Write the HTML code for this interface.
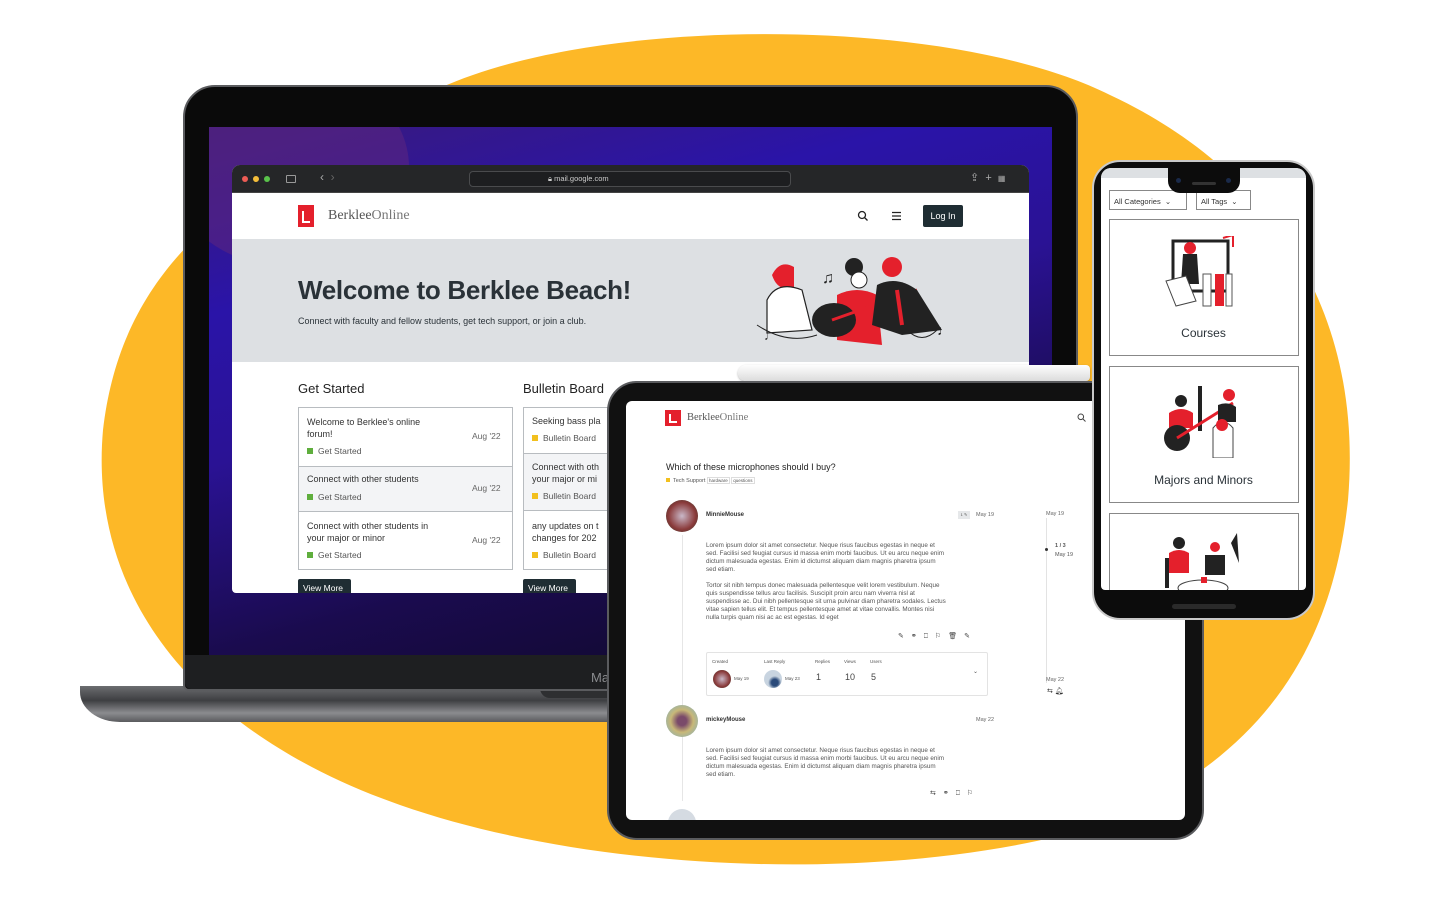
<!DOCTYPE html>
<html><head><meta charset="utf-8">
<style>
*{margin:0;padding:0;box-sizing:border-box}
body{width:1440px;height:900px;background:#fff;position:relative;overflow:hidden;font-family:"Liberation Sans",sans-serif;color:#222}
.a{position:absolute}
.t{position:absolute;white-space:nowrap}
</style></head><body>
<svg class="a" style="left:0;top:0" width="1440" height="900">
<path d="M440 88 C600 15 950 15 1110 95 C1260 165 1365 300 1348 500 C1332 650 1262 760 1100 825 C900 885 600 875 400 805 C200 735 88 600 103 430 C118 300 190 225 300 160 Z" fill="#fdb827"/>
</svg>

<!-- LAPTOP -->
<div class="a" style="left:80px;top:686px;width:1010px;height:36px;border-radius:0 0 40px 40px/0 0 30px 30px;background:linear-gradient(#6c6d70,#3e3f42 40%,#8b8c8f 75%,#5a5b5e)"></div>
<div class="a" style="left:540px;top:686px;width:80px;height:12px;border-radius:0 0 10px 10px;background:#2e2f31"></div>
<div class="a" style="left:183px;top:85px;width:895px;height:606px;border-radius:32px 32px 6px 6px;background:#0a0a0a;border:2px solid #5b5c5f"></div>
<div class="a" style="left:185px;top:655px;width:891px;height:34px;background:#1e1f21;border-radius:0 0 6px 6px"></div>
<div class="t" style="left:591px;top:670px;font-size:13px;color:#8a8b8e">Ma</div>
<div class="a" style="left:209px;top:127px;width:843px;height:528px;overflow:hidden;background:linear-gradient(165deg,#3a1a7a 0%,#2a14a8 25%,#2a1294 45%,#1a0b4e 70%,#0d0820 100%)">
 <div class="a" style="left:-40px;top:-60px;width:240px;height:200px;border-radius:50%;background:#5a2480;opacity:.6"></div>
</div>
<!-- browser -->
<div class="a" style="left:232px;top:165px;width:797px;height:428px;border-radius:8px 8px 4px 4px;overflow:hidden;background:#fff">
 <div class="a" style="left:0;top:0;width:797px;height:28px;background:#252628;border-bottom:1px solid #444"></div>
 <div class="a" style="left:10px;top:11px;width:6px;height:6px;border-radius:50%;background:#ed5c55"></div>
 <div class="a" style="left:21px;top:11px;width:6px;height:6px;border-radius:50%;background:#f4bd3a"></div>
 <div class="a" style="left:32px;top:11px;width:6px;height:6px;border-radius:50%;background:#5ac34b"></div>
 <div class="a" style="left:54px;top:10px;width:10px;height:8px;border:1px solid #999;border-radius:1px"></div>
 <div class="t" style="left:88px;top:5px;font-size:12px;color:#aaa">‹ &nbsp;<span style="color:#666">›</span></div>
 <div class="a" style="left:237px;top:6px;width:322px;height:16px;border:1px solid #4a4b4d;border-radius:4px;background:#1d1e20"></div>
 <div class="t" style="left:316px;top:9px;font-size:7.5px;color:#ccc">🔒︎ mail.google.com</div>
 <div class="t" style="left:738px;top:6px;font-size:11px;color:#aaa">⇪ &nbsp;+ &nbsp;<span style="font-size:8px">▦</span></div>
 <div class="a" style="left:0;top:74px;width:797px;height:123px;background:#dde0e3"></div>
 <div class="a" style="left:66px;top:40px;width:16px;height:22px;background:#e4202c"></div>
 <div class="a" style="left:70px;top:46px;width:8px;height:12px;border:2px solid #fff;border-top:none;border-right:none"></div>
 <div class="t" style="left:96px;top:43px;font-family:'Liberation Serif',serif;font-size:14px;color:#555">Berklee<span style="color:#777">Online</span></div>
 <svg class="a" style="left:625px;top:45px" width="12" height="12"><circle cx="5" cy="5" r="3.5" fill="none" stroke="#222" stroke-width="1.3"/><path d="M7.5 7.5 L10.5 10.5" stroke="#222" stroke-width="1.3"/></svg>
 <svg class="a" style="left:660px;top:46px" width="10" height="10"><path d="M0 1.5H9M0 5H9M0 8.5H9" stroke="#222" stroke-width="1.3"/></svg>
 <div class="a" style="left:691px;top:40px;width:40px;height:22px;background:#1f2d33;border-radius:2px;color:#fff;font-size:9px;text-align:center;line-height:22px">Log In</div>
 <div class="t" style="left:66px;top:110px;font-size:26px;font-weight:bold;color:#2a3238;letter-spacing:-.3px">Welcome to Berklee Beach!</div>
 <div class="t" style="left:66px;top:151px;font-size:9px;color:#2a3238">Connect with faculty and fellow students, get tech support, or join a club.</div>
 <svg class="a" style="left:520px;top:90px" width="215" height="92">
  <path d="M20 20 q8-16 22-8 l0 20 q-16 6-22-12z" fill="#e4202c"/>
  <path d="M15 45 q10-20 35-10 l10 40 l-45 3z" fill="#fff" stroke="#222" stroke-width="1.2"/>
  <circle cx="102" cy="12" r="9" fill="#222"/><circle cx="107" cy="25" r="8" fill="#fff" stroke="#222"/>
  <path d="M85 40 q20-10 40 0 l5 50 l-45 -5z" fill="#e4202c"/>
  <ellipse cx="82" cy="65" rx="22" ry="17" fill="#222"/>
  <path d="M80 65 L165 35" stroke="#e4202c" stroke-width="3"/>
  <circle cx="140" cy="12" r="10" fill="#e4202c"/>
  <path d="M125 30 q20-10 40 5 l25 40 l-40 5 l-30-10z" fill="#222"/>
  <path d="M145 35 l5 35" stroke="#e4202c" stroke-width="4"/>
  <path d="M5 70 q30 20 60 10 M155 75 q15 15 30 0" stroke="#222" fill="none"/>
  <text x="70" y="28" font-size="16" fill="#222">♫</text><text x="185" y="80" font-size="14" fill="#222">♩</text><text x="12" y="85" font-size="12" fill="#222">♩</text>
 </svg>
 <div class="t" style="left:66px;top:216px;font-size:13px;color:#222">Get Started</div>
 <div class="t" style="left:291px;top:216px;font-size:13px;color:#222">Bulletin Board</div>
 <div class="a" style="left:66px;top:242px;width:215px;height:163px;border:1px solid #b8bcc0"></div>
 <div class="a" style="left:67px;top:301px;width:213px;height:46px;background:#f3f4f6;border-top:1px solid #b8bcc0;border-bottom:1px solid #b8bcc0"></div>
 <div class="t" style="left:75px;top:251px;font-size:9px;line-height:12px;color:#333">Welcome to Berklee's online<br>forum!</div>
 <div class="t" style="left:75px;top:309px;font-size:9px;color:#333">Connect with other students</div>
 <div class="t" style="left:75px;top:355px;font-size:9px;line-height:12px;color:#333">Connect with other students in<br>your major or minor</div>
 <div class="t" style="left:240px;top:266px;font-size:8.5px;color:#666">Aug '22</div>
 <div class="t" style="left:240px;top:318px;font-size:8.5px;color:#666">Aug '22</div>
 <div class="t" style="left:240px;top:370px;font-size:8.5px;color:#666">Aug '22</div>
 <div class="t" style="left:75px;top:281px;font-size:8.5px;color:#555"><span style="display:inline-block;width:6px;height:6px;background:#5fae3d;margin-right:5px"></span>Get Started</div>
 <div class="t" style="left:75px;top:327px;font-size:8.5px;color:#555"><span style="display:inline-block;width:6px;height:6px;background:#5fae3d;margin-right:5px"></span>Get Started</div>
 <div class="t" style="left:75px;top:385px;font-size:8.5px;color:#555"><span style="display:inline-block;width:6px;height:6px;background:#5fae3d;margin-right:5px"></span>Get Started</div>
 <div class="a" style="left:291px;top:242px;width:110px;height:163px;border:1px solid #b8bcc0"></div>
 <div class="a" style="left:292px;top:288px;width:110px;height:58px;background:#f3f4f6;border-top:1px solid #b8bcc0;border-bottom:1px solid #b8bcc0"></div>
 <div class="t" style="left:300px;top:251px;font-size:9px;color:#333">Seeking bass pla</div>
 <div class="t" style="left:300px;top:296px;font-size:9px;line-height:12px;color:#333">Connect with oth<br>your major or mi</div>
 <div class="t" style="left:300px;top:355px;font-size:9px;line-height:12px;color:#333">any updates on t<br>changes for 202</div>
 <div class="t" style="left:300px;top:268px;font-size:8.5px;color:#555"><span style="display:inline-block;width:6px;height:6px;background:#f2c01e;margin-right:5px"></span>Bulletin Board</div>
 <div class="t" style="left:300px;top:326px;font-size:8.5px;color:#555"><span style="display:inline-block;width:6px;height:6px;background:#f2c01e;margin-right:5px"></span>Bulletin Board</div>
 <div class="t" style="left:300px;top:385px;font-size:8.5px;color:#555"><span style="display:inline-block;width:6px;height:6px;background:#f2c01e;margin-right:5px"></span>Bulletin Board</div>
 <div class="a" style="left:66px;top:414px;width:53px;height:16px;background:#1f2d33;border-radius:2px;color:#fff;font-size:8.5px;padding:4px 0 0 5px">View More</div>
 <div class="a" style="left:291px;top:414px;width:53px;height:16px;background:#1f2d33;border-radius:2px;color:#fff;font-size:8.5px;padding:4px 0 0 5px">View More</div>
</div>

<!-- PENCIL -->
<div class="a" style="left:738px;top:365px;width:352px;height:16px;border-radius:8px 4px 4px 8px;background:linear-gradient(#fdfdfd,#dcdcdc);box-shadow:0 1px 2px rgba(0,0,0,.3)"></div>

<!-- TABLET -->
<div class="a" style="left:607px;top:381px;width:597px;height:459px;border-radius:30px;background:#111;border:2px solid #5a5b5e"></div>
<div class="a" style="left:626px;top:401px;width:559px;height:419px;background:#fff;border-radius:6px;overflow:hidden">
 <div class="a" style="left:39px;top:9px;width:16px;height:16px;background:#e4202c"></div>
 <div class="a" style="left:43px;top:13px;width:8px;height:9px;border:2px solid #fff;border-top:none;border-right:none"></div>
 <div class="t" style="left:61px;top:11px;font-family:'Liberation Serif',serif;font-size:10.5px;color:#555">Berklee<span style="color:#777">Online</span></div>
 <svg class="a" style="left:451px;top:12px" width="9" height="9"><circle cx="3.8" cy="3.8" r="2.8" fill="none" stroke="#444"/><path d="M6 6L8.5 8.5" stroke="#444"/></svg>
 <div class="t" style="left:40px;top:61px;font-size:9px;color:#222">Which of these microphones should I buy?</div>
 <div class="t" style="left:40px;top:77px;font-size:5.5px;color:#555"><span style="display:inline-block;width:4px;height:4px;background:#f2c01e;margin-right:3px"></span>Tech Support <span style="border:1px solid #ddd;padding:0 1px;font-size:4.5px">hardware</span> <span style="border:1px solid #ddd;padding:0 1px;font-size:4.5px">questions</span></div>
 <div class="a" style="left:40px;top:99px;width:32px;height:32px;border-radius:50%;background:radial-gradient(#c9b8c8,#8a3a3a 60%,#2c3a2a)"></div>
 <div class="a" style="left:56px;top:134px;width:1px;height:240px;background:#e6e6e6"></div>
 <div class="t" style="left:80px;top:111px;font-size:6px;font-weight:bold;color:#333">MinnieMouse</div>
 <div class="a" style="left:332px;top:110px;width:12px;height:8px;background:#e6e8ea;font-size:4px;color:#555;text-align:center;line-height:8px">1 ✎</div>
 <div class="t" style="left:350px;top:111px;font-size:5.5px;color:#666">May 19</div>
 <div class="a" style="left:80px;top:141px;width:240px;font-size:6.3px;line-height:8px;color:#555;white-space:normal">Lorem ipsum dolor sit amet consectetur. Neque risus faucibus egestas in neque et sed. Facilisi sed feugiat cursus id massa enim morbi faucibus. Ut eu arcu neque enim dictum malesuada egestas. Enim id dictumst aliquam diam magnis pharetra ipsum sed etiam.<br><br>Tortor sit nibh tempus donec malesuada pellentesque velit lorem vestibulum. Neque quis suspendisse tellus arcu facilisis. Suscipit proin arcu nam viverra nisl at suspendisse ac. Dui nibh pellentesque sit urna pulvinar diam pharetra sodales. Lectus vitae sapien tellus elit. Et tempus pellentesque amet at vitae convallis. Montes nisi nulla turpis quam nisi ac ac est egestas. Id eget</div>
 <div class="t" style="left:272px;top:231px;font-size:7px;color:#444;letter-spacing:7px">✎⚭⎕⚐🗑︎✎</div>
 <div class="a" style="left:80px;top:251px;width:282px;height:44px;border:1px solid #e3e3e3;border-radius:2px"></div>
 <div class="t" style="left:86px;top:258px;font-size:4.5px;color:#555">Created</div>
 <div class="t" style="left:138px;top:258px;font-size:4.5px;color:#555">Last Reply</div>
 <div class="t" style="left:189px;top:258px;font-size:4.5px;color:#555">Replies</div>
 <div class="t" style="left:218px;top:258px;font-size:4.5px;color:#555">Views</div>
 <div class="t" style="left:244px;top:258px;font-size:4.5px;color:#555">Users</div>
 <div class="a" style="left:87px;top:269px;width:18px;height:18px;border-radius:50%;background:radial-gradient(#c9b8c8,#8a3a3a 60%,#2c3a2a)"></div>
 <div class="t" style="left:108px;top:275px;font-size:4.5px;color:#555">May 19</div>
 <div class="a" style="left:138px;top:269px;width:18px;height:18px;border-radius:50%;background:radial-gradient(circle at 60% 70%,#2a4a7a 20%,#c8d4e0 40%)"></div>
 <div class="t" style="left:159px;top:275px;font-size:4.5px;color:#555">May 23</div>
 <div class="t" style="left:190px;top:271px;font-size:9px;color:#444">1</div>
 <div class="t" style="left:219px;top:271px;font-size:9px;color:#444">10</div>
 <div class="t" style="left:245px;top:271px;font-size:9px;color:#444">5</div>
 <div class="t" style="left:347px;top:267px;font-size:6px;color:#555">⌄</div>
 <div class="a" style="left:420px;top:117px;width:1px;height:165px;background:#e3e3e3"></div>
 <div class="a" style="left:419px;top:147px;width:3px;height:3px;border-radius:50%;background:#333"></div>
 <div class="t" style="left:420px;top:110px;font-size:5.5px;color:#666">May 19</div>
 <div class="t" style="left:429px;top:141px;font-size:5.5px;line-height:9px;color:#555"><b>1 / 3</b><br>May 19</div>
 <div class="t" style="left:420px;top:276px;font-size:5.5px;color:#666">May 22</div>
 <div class="t" style="left:421px;top:286px;font-size:7px;color:#333">⇆ 🔔︎</div>
 <div class="a" style="left:40px;top:304px;width:32px;height:32px;border-radius:50%;background:radial-gradient(#7a4a6a 20%,#c8b878 50%,#7ab0c8)"></div>
 <div class="t" style="left:80px;top:316px;font-size:6px;font-weight:bold;color:#333">mickeyMouse</div>
 <div class="t" style="left:350px;top:316px;font-size:5.5px;color:#666">May 22</div>
 <div class="a" style="left:56px;top:340px;width:1px;height:60px;background:#e6e6e6"></div>
 <div class="a" style="left:80px;top:346px;width:240px;font-size:6.3px;line-height:8px;color:#555;white-space:normal">Lorem ipsum dolor sit amet consectetur. Neque risus faucibus egestas in neque et sed. Facilisi sed feugiat cursus id massa enim morbi faucibus. Ut eu arcu neque enim dictum malesuada egestas. Enim id dictumst aliquam diam magnis pharetra ipsum sed etiam.</div>
 <div class="t" style="left:304px;top:388px;font-size:7px;color:#444;letter-spacing:7px">⇆⚭⎕⚐</div>
 <div class="a" style="left:42px;top:408px;width:28px;height:28px;border-radius:50%;background:#d5dbe2"></div>
</div>

<!-- PHONE -->
<div class="a" style="left:1092px;top:160px;width:223px;height:460px;border-radius:28px;background:#0c0c0c;border:2px solid #c9c9c9"></div>
<div class="a" style="left:1101px;top:168px;width:205px;height:422px;background:#fff;border-radius:10px 10px 4px 4px;overflow:hidden">
 <div class="a" style="left:0;top:0;width:205px;height:10px;background:#dde0e3"></div>
 <div class="a" style="left:8px;top:22px;width:78px;height:20px;border:1px solid #888;font-size:7.5px;color:#333;padding:6px 0 0 4px">All Categories &nbsp;⌄</div>
 <div class="a" style="left:95px;top:22px;width:55px;height:20px;border:1px solid #888;font-size:7.5px;color:#333;padding:6px 0 0 4px">All Tags &nbsp;⌄</div>
 <div class="a" style="left:8px;top:51px;width:190px;height:137px;border:1px solid #888"></div>
 <svg class="a" style="left:62px;top:68px" width="80" height="75"><rect x="10" y="5" width="55" height="50" fill="#fff" stroke="#222" stroke-width="3"/><circle cx="27" cy="12" r="6" fill="#e4202c"/><path d="M20 18h14l2 30h-18z" fill="#222"/><rect x="40" y="38" width="8" height="32" fill="#fff" stroke="#555"/><rect x="52" y="38" width="9" height="32" fill="#e4202c"/><rect x="63" y="38" width="6" height="32" fill="#fff" stroke="#555"/><path d="M3 45l20-5 10 25-20 5z" fill="#fff" stroke="#444"/><path d="M60 2l10-3v12" stroke="#e4202c" fill="none" stroke-width="2"/></svg>
 <div class="t" style="left:0;width:205px;text-align:center;top:158px;font-size:12px;color:#2a3238">Courses</div>
 <div class="a" style="left:8px;top:198px;width:190px;height:137px;border:1px solid #888"></div>
 <svg class="a" style="left:62px;top:215px" width="80" height="75"><rect x="35" y="3" width="4" height="45" fill="#222"/><circle cx="18" cy="18" r="6" fill="#222"/><path d="M6 30q12-8 24 0v15h-24z" fill="#e4202c"/><ellipse cx="14" cy="55" rx="13" ry="13" fill="#222"/><path d="M14 55L70 20" stroke="#e4202c" stroke-width="3"/><circle cx="66" cy="12" r="6" fill="#e4202c"/><path d="M55 22q10-4 18 2v15h-18z" fill="#222"/><path d="M50 45q10-12 20 0v30h-20z" fill="#fff" stroke="#444"/><circle cx="59" cy="42" r="6" fill="#e4202c"/></svg>
 <div class="t" style="left:0;width:205px;text-align:center;top:305px;font-size:12px;color:#2a3238">Majors and Minors</div>
 <div class="a" style="left:8px;top:345px;width:190px;height:90px;border:1px solid #888"></div>
 <svg class="a" style="left:62px;top:365px" width="80" height="60"><circle cx="16" cy="10" r="6" fill="#222"/><path d="M6 20q10-6 20 0v20h-20z" fill="#e4202c"/><rect x="2" y="25" width="4" height="30" fill="#222"/><circle cx="52" cy="14" r="5" fill="#e4202c"/><path d="M42 22h20v20h-20z" fill="#222"/><path d="M68 10l6-10 2 30z" fill="#222"/><ellipse cx="40" cy="55" rx="25" ry="8" fill="#fff" stroke="#444"/><rect x="38" y="44" width="6" height="6" fill="#e4202c"/></svg>
</div>
<div class="a" style="left:1168px;top:166px;width:72px;height:27px;background:#0c0c0c;border-radius:0 0 12px 12px"></div>
<div class="a" style="left:1176px;top:178px;width:5px;height:5px;border-radius:50%;background:#1a2a4a"></div>
<div class="a" style="left:1226px;top:178px;width:5px;height:5px;border-radius:50%;background:#1a2a4a"></div>
<div class="a" style="left:1192px;top:182px;width:24px;height:3px;border-radius:2px;background:#333"></div>
<div class="a" style="left:1172px;top:604px;width:64px;height:5px;border-radius:3px;background:#2a2a2a"></div>
</body></html>
